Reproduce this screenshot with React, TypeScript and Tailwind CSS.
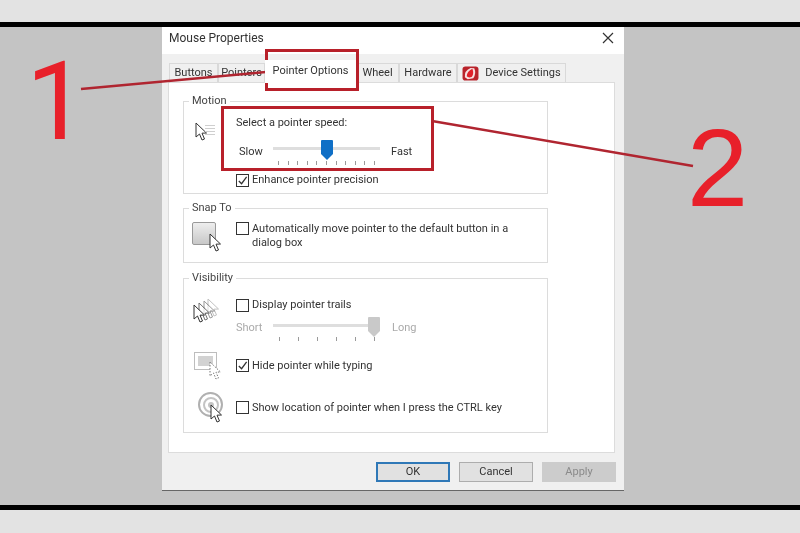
import React from "react";

const Cursor = ({ className, dashed }: { className?: string; dashed?: boolean }) => (
  <svg viewBox="0 0 14 20" className={className}>
    <path
      d="M1 1 L1 15 L4.5 12 L7 18 L9.5 17 L7 11.2 L11.5 11 Z"
      fill="#fff"
      stroke={dashed ? "#777" : "#333"}
      strokeWidth="1"
      strokeDasharray={dashed ? "1.5 1.5" : undefined}
    />
  </svg>
);

const Check = ({ checked }: { checked?: boolean }) => (
  <span className="flex h-[13px] w-[13px] shrink-0 items-center justify-center border border-[#333] bg-white">
    {checked && (
      <svg viewBox="0 0 12 12" className="h-[11px] w-[11px]">
        <path d="M2 6.5 L5 9.5 L10.5 2" fill="none" stroke="#333" strokeWidth="1.4" />
      </svg>
    )}
  </span>
);

const Ticks = ({ count, className }: { count: number; className: string }) => (
  <div className={className}>
    {Array.from({ length: count }).map((_, i) => (
      <span key={i} className="h-[4px] w-px bg-[#9a9a9a]" />
    ))}
  </div>
);

const Thumb = ({ color }: { color: string }) => (
  <svg viewBox="0 0 12 20" className="h-[20px] w-[12px]">
    <path d="M0 1 Q0 0 1 0 L11 0 Q12 0 12 1 L12 14 L6 20 L0 14 Z" fill={color} />
  </svg>
);

const Group = ({ title, className, children }: { title: string; className: string; children: React.ReactNode }) => (
  <div className={`relative w-[365px] border border-[#dcdcdc] ${className}`}>
    <span className="absolute left-[5px] top-[-8px] bg-white px-[3px] text-[11px] leading-[14px] text-[#444]">{title}</span>
    {children}
  </div>
);

const Tab = ({ className, children }: { className: string; children: React.ReactNode }) => (
  <div className={`flex h-[19px] items-center justify-center border border-b-0 border-[#d9d9d9] bg-[#f0f0f0] text-[11px] text-[#333] ${className}`}>
    {children}
  </div>
);

const Btn = ({ className, children }: { className: string; children: React.ReactNode }) => (
  <div className={`flex h-[20px] w-[74px] items-center justify-center text-[11px] ${className}`}>{children}</div>
);

export default function App() {
  return (
    <div
      className="relative flex h-[533px] w-[800px] flex-col overflow-hidden bg-[#e3e3e3] blur-[0.4px]"
      style={{ fontFamily: 'Roboto, "Open Sans", sans-serif' }}
    >
      <div className="h-[22px]" />
      <div className="h-[488px] border-y-[5px] border-black bg-[#c4c4c4] pl-[162px]">
        <div className="flex h-[464px] w-[462px] flex-col border-b border-[#666] bg-[#f0f0f0]">
          {/* title bar */}
          <div className="flex h-[27px] items-center justify-between bg-white pb-[6px] pl-[7px] pr-[10px]">
            <span className="text-[12px] text-[#333]">Mouse Properties</span>
            <svg viewBox="0 0 12 12" className="h-[12px] w-[12px]">
              <path d="M1 1 L11 11 M11 1 L1 11" stroke="#333" strokeWidth="1.2" />
            </svg>
          </div>

          {/* tabs */}
          <div className="flex h-[28px] items-end pl-[7px]">
            <Tab className="w-[49px]">Buttons</Tab>
            <Tab className="w-[47px]">Pointers</Tab>
            <div className="z-10 mb-[-1px] flex h-[23px] w-[91px] items-center justify-center bg-white text-[11px] text-[#333]">
              Pointer Options
            </div>
            <Tab className="w-[43px]">Wheel</Tab>
            <Tab className="w-[58px]">Hardware</Tab>
            <Tab className="w-[109px] gap-[6px]">
              <svg viewBox="0 0 18 16" className="h-[15px] w-[17px]">
                <rect x="0.5" y="0.5" width="17" height="15" rx="3" fill="#b9222a" />
                <path d="M3 12 Q2 5 9 2 L13 2.5 Q15.5 8 12 13 L6 14 Z" fill="#f6dfe0" />
                <path d="M5 11 Q5 6 11 3 Q13 8 10.5 11.5 Q7 13 5 11 Z" fill="#e0202a" />
              </svg>
              <span>Device Settings</span>
            </Tab>
          </div>

          {/* panel */}
          <div className="ml-[6px] h-[371px] w-[447px] border border-[#dcdcdc] bg-white pl-[14px] pt-[18px]">
            <Group title="Motion" className="h-[93px]">
              <div className="flex pl-[11px] pt-[14px]">
                <div className="flex w-[41px] items-start pt-[6px]">
                  <Cursor className="h-[20px] w-[14px]" />
                  <div className="ml-[-4px] mt-[3px] flex flex-col gap-[2px]">
                    <span className="h-px w-[10px] bg-[#cfcfcf]" />
                    <span className="h-px w-[10px] bg-[#cfcfcf]" />
                    <span className="h-px w-[10px] bg-[#cfcfcf]" />
                    <span className="h-px w-[10px] bg-[#cfcfcf]" />
                  </div>
                </div>
                <div className="flex-1">
                  <div className="text-[11px] leading-[14px] text-[#333]">Select a pointer speed:</div>
                  <div className="mt-[10px] flex items-start">
                    <span className="mt-[5px] w-[37px] pl-[3px] text-[11px] leading-[14px] text-[#333]">Slow</span>
                    <div className="relative h-[30px] w-[107px]">
                      <div className="absolute left-0 right-0 top-[7px] h-[3px] bg-[#dedede]" />
                      <div className="absolute left-[48px] top-0">
                        <Thumb color="#0f6fc6" />
                      </div>
                      <Ticks count={11} className="absolute left-[5px] top-[21px] flex w-[97px] justify-between" />
                    </div>
                    <span className="ml-[11px] mt-[5px] text-[11px] leading-[14px] text-[#333]">Fast</span>
                  </div>
                  <div className="mt-[3px] flex items-center gap-[3px]">
                    <Check checked />
                    <span className="text-[11px] leading-[14px] text-[#333]">Enhance pointer precision</span>
                  </div>
                </div>
              </div>
            </Group>

            <Group title="Snap To" className="mt-[14px] h-[55px]">
              <div className="flex pl-[8px] pt-[13px]">
                <div className="relative w-[44px]">
                  <div className="h-[23px] w-[24px] rounded-[2px] border border-[#999] bg-gradient-to-b from-[#eeeeee] to-[#c8c8c8]" />
                  <Cursor className="absolute left-[17px] top-[11px] h-[20px] w-[14px]" />
                </div>
                <div className="flex gap-[3px]">
                  <Check />
                  <span className="w-[264px] text-[11px] leading-[14px] text-[#333]">
                    Automatically move pointer to the default button in a dialog box
                  </span>
                </div>
              </div>
            </Group>

            <Group title="Visibility" className="mt-[15px] h-[155px]">
              <div className="flex pl-[9px] pt-[19px]">
                <div className="relative h-[26px] w-[43px]">
                  <Cursor className="absolute left-[14px] top-0 h-[20px] w-[14px] opacity-30" />
                  <Cursor className="absolute left-[10px] top-[2px] h-[20px] w-[14px] opacity-50" />
                  <Cursor className="absolute left-[5px] top-[4px] h-[20px] w-[14px] opacity-70" />
                  <Cursor className="absolute left-0 top-[6px] h-[20px] w-[14px]" />
                </div>
                <div className="flex-1">
                  <div className="flex items-center gap-[3px]">
                    <Check />
                    <span className="text-[11px] leading-[14px] text-[#333]">Display pointer trails</span>
                  </div>
                  <div className="mt-[5px] flex items-start">
                    <span className="mt-[4px] w-[37px] text-[11px] leading-[14px] text-[#aaaaaa]">Short</span>
                    <div className="relative h-[26px] w-[107px]">
                      <div className="absolute left-0 right-[12px] top-[7px] h-[3px] bg-[#dedede]" />
                      <div className="absolute left-[95px] top-0">
                        <Thumb color="#c9c9c9" />
                      </div>
                      <Ticks count={6} className="absolute left-[6px] top-[20px] flex w-[96px] justify-between" />
                    </div>
                    <span className="ml-[12px] mt-[4px] text-[11px] leading-[14px] text-[#aaaaaa]">Long</span>
                  </div>
                </div>
              </div>

              <div className="mt-[9px] flex pl-[10px]">
                <div className="relative h-[29px] w-[42px]">
                  <div className="h-[18px] w-[23px] border border-[#bdbdbd] p-[3px]">
                    <div className="h-full w-[15px] bg-[#d2d2d2]" />
                  </div>
                  <Cursor dashed className="absolute left-[15px] top-[9px] h-[20px] w-[14px]" />
                </div>
                <div className="flex items-start gap-[3px] pt-[7px]">
                  <Check checked />
                  <span className="text-[11px] leading-[14px] text-[#333]">Hide pointer while typing</span>
                </div>
              </div>

              <div className="mt-[11px] flex pl-[14px]">
                <div className="relative h-[32px] w-[38px]">
                  <div className="flex h-[25px] w-[25px] items-center justify-center rounded-full border-2 border-[#b0b0b0]">
                    <div className="flex h-[16px] w-[16px] items-center justify-center rounded-full border-2 border-[#c4c4c4]">
                      <div className="h-[6px] w-[6px] rounded-full bg-[#c4c4c4]" />
                    </div>
                  </div>
                  <Cursor className="absolute left-[12px] top-[12px] h-[20px] w-[14px]" />
                </div>
                <div className="flex items-start gap-[3px] pt-[9px]">
                  <Check />
                  <span className="text-[11px] leading-[14px] text-[#333]">Show location of pointer when I press the CTRL key</span>
                </div>
              </div>
            </Group>
          </div>

          {/* buttons */}
          <div className="mt-[9px] flex gap-[9px] pl-[214px]">
            <Btn className="border-2 border-[#2f78b7] bg-[#e1e1e1] text-[#333]">OK</Btn>
            <Btn className="border border-[#adadad] bg-[#e1e1e1] text-[#333]">Cancel</Btn>
            <Btn className="border border-[#cccccc] bg-[#cccccc] text-[#8a8a8a]">Apply</Btn>
          </div>
        </div>
      </div>

      {/* red annotations */}
      <div className="absolute left-[265px] top-[49px] h-[42px] w-[94px] border-[3px] border-[#b8202a]" />
      <div className="absolute left-[221px] top-[106px] h-[65px] w-[213px] border-[3px] border-[#b8202a]" />
      <svg viewBox="0 0 800 533" className="absolute left-0 top-0 h-[533px] w-[800px]">
        <path d="M81 89 L266 72" stroke="#b02530" strokeWidth="2.5" />
        <path d="M432 121 L693 166" stroke="#b02530" strokeWidth="2.5" />
      </svg>
      <span
        className="absolute left-[26px] top-[42px] text-[109px] leading-[120px] text-[#e8202a]"
        style={{ fontFamily: 'Roboto, sans-serif' }}
      >
        1
      </span>
      <span
        className="absolute left-[687px] top-[108px] text-[110px] leading-[120px] text-[#e8202a]"
        style={{ fontFamily: '"Liberation Sans", sans-serif' }}
      >
        2
      </span>
    </div>
  );
}
